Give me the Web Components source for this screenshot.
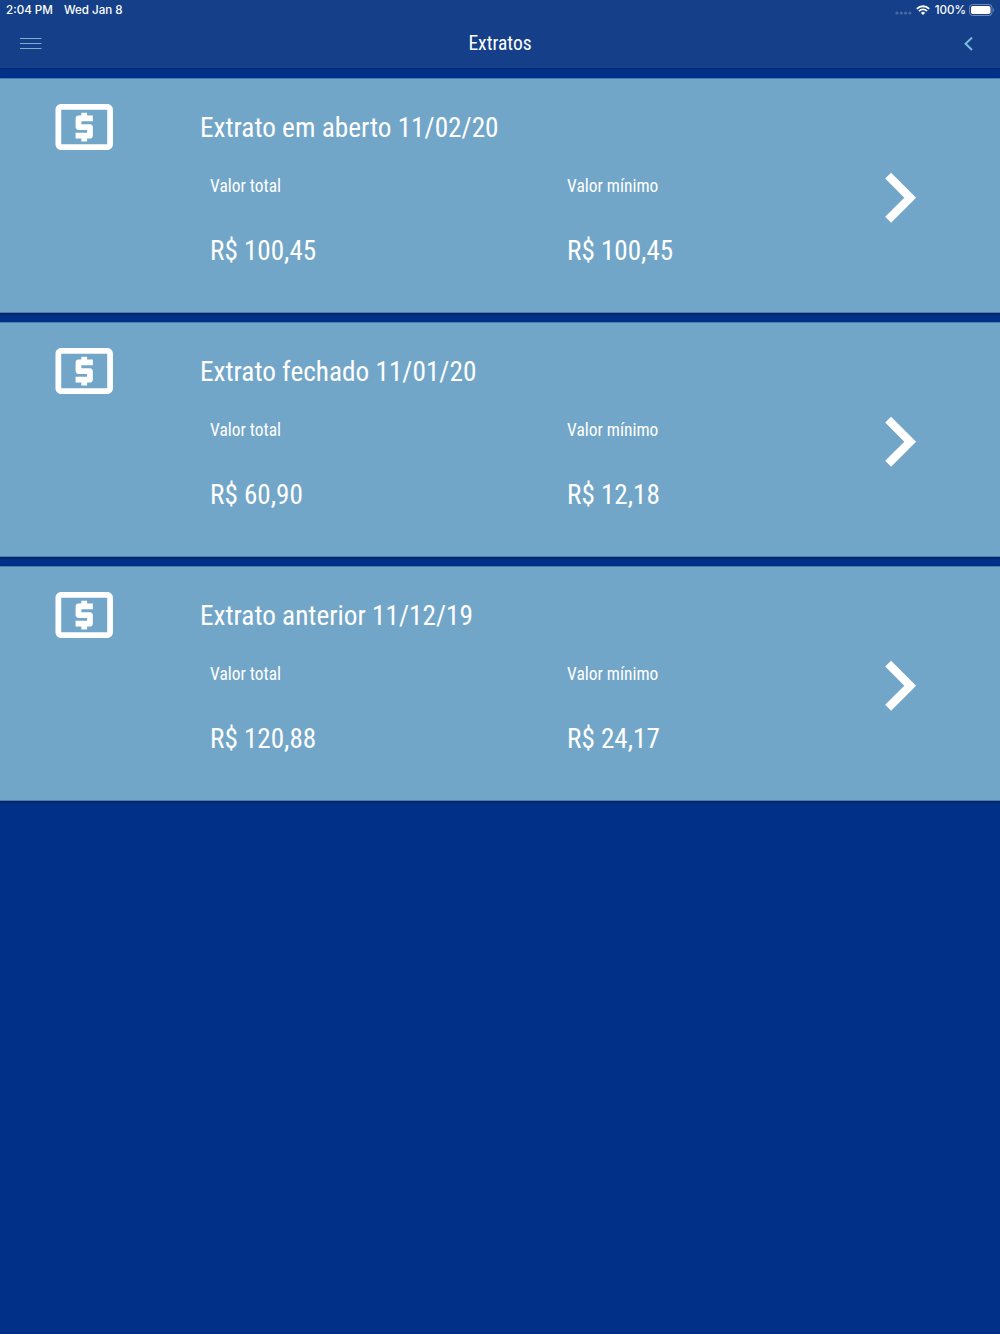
<!DOCTYPE html>
<html lang="pt-BR">
<head>
<meta charset="utf-8">
<title>Extratos</title>
<style>
    body {
        margin: 0;
        background: #003087;
    }
</style>
</head>
<body>
<statement-app>
    <status-bar slot="top" time="2:04 PM" date="Wed Jan 8" battery="100%"></status-bar>
    <nav-bar slot="top">Extratos</nav-bar>
    <statement-card total="R$ 100,45" minimum="R$ 100,45">Extrato em aberto 11/02/20</statement-card>
    <statement-card total="R$ 60,90" minimum="R$ 12,18">Extrato fechado 11/01/20</statement-card>
    <statement-card total="R$ 120,88" minimum="R$ 24,17">Extrato anterior 11/12/19</statement-card>
</statement-app>

<script>
class StatementApp extends HTMLElement {
    constructor() {
        super();
        this.attachShadow({ mode: 'open' });
        this.shadowRoot.innerHTML = `
            <style>
                :host {
                    display: block;
                    min-height: 1334px;
                    background: #003087;
                    color: #fff;
                    font-family: "Roboto Condensed", Roboto, sans-serif;
                    font-stretch: 75%;
                }
                header {
                    height: 68px;
                    background: #153f88;
                    box-shadow: 0 1px 1px rgba(0, 25, 90, .3);
                }
                main {
                    display: flex;
                    flex-direction: column;
                    gap: 9px;
                    padding-top: 10px;
                }
            </style>
            <header><slot name="top"></slot></header>
            <main><slot></slot></main>
        `;
    }
}

class StatusBar extends HTMLElement {
    constructor() {
        super();
        this.attachShadow({ mode: 'open' });
    }

    connectedCallback() {
        this.shadowRoot.innerHTML = `
            <style>
                :host {
                    display: flex;
                    align-items: center;
                    height: 20px;
                    padding: 0 5px 0 6px;
                    font: 500 11.6px/20px Inter, sans-serif;
                }
                .date { margin-left: 11px; }
                .dots { margin-left: auto; margin-top: 6px; }
                .wifi { margin: 0 5px 0 4px; }
                .battery { margin-left: 3px; }
                svg { display: block; }
            </style>
            <span>${this.getAttribute('time')}</span>
            <span class="date">${this.getAttribute('date')}</span>
            <svg class="dots" width="17" height="4" fill="#4a69a3">
                <circle cx="2" cy="2" r="1.6"/><circle cx="6.3" cy="2" r="1.6"/>
                <circle cx="10.6" cy="2" r="1.6"/><circle cx="14.9" cy="2" r="1.6"/>
            </svg>
            <svg class="wifi" width="14" height="10" viewBox="0 0 14 10" fill="none" stroke="#fff" stroke-width="1.8">
                <path d="M.8 3.8a8.8 8.8 0 0 1 12.4 0M3 6.1a5.7 5.7 0 0 1 8 0"/>
                <path d="M7 10L4.9 7.9a3 3 0 0 1 4.2 0z" fill="#fff" stroke="none"/>
            </svg>
            <span>${this.getAttribute('battery')}</span>
            <svg class="battery" width="26" height="12" viewBox="0 0 26 12">
                <rect x=".5" y=".5" width="22.5" height="11" rx="3" fill="none" stroke="#7089b8"/>
                <rect x="2" y="2" width="19.5" height="8" rx="1.7" fill="#fff"/>
                <path d="M24.3 4v4c1.3-.6 1.3-3.4 0-4z" fill="#7089b8"/>
            </svg>
        `;
    }
}

class NavBar extends HTMLElement {
    constructor() {
        super();
        this.attachShadow({ mode: 'open' });
        this.shadowRoot.innerHTML = `
            <style>
                :host {
                    display: grid;
                    grid-template-columns: 60px 1fr 60px;
                    align-items: center;
                    height: 48px;
                    font-size: 19.5px;
                    text-align: center;
                }
                svg { display: block; }
                span { margin-top: -1px; }
                .menu { margin-left: 20px; }
                .back { margin-left: 23px; }
            </style>
            <svg class="menu" width="22" height="12" stroke="#77b1d2" stroke-width="1">
                <path d="M0 .5h21.5M0 5.5h21.5M0 10.5h21.5"/>
            </svg>
            <span><slot></slot></span>
            <svg class="back" width="10" height="14" fill="none" stroke="#7cbddb" stroke-width="2">
                <path d="M9 .6L2.6 6.8 9 13"/>
            </svg>
        `;
    }
}

class StatementCard extends HTMLElement {
    constructor() {
        super();
        this.attachShadow({ mode: 'open' });
    }

    connectedCallback() {
        this.shadowRoot.innerHTML = `
            <style>
                :host {
                    display: grid;
                    grid-template-columns: 200px 649px 151px;
                    box-sizing: border-box;
                    height: 235px;
                    background: #72a6c8;
                    border: solid #4880b1;
                    border-width: 1px 0;
                    box-shadow: 0 1px 2px rgba(0, 0, 0, .45);
                }
                svg { display: block; }
                .money { margin: 13px 0 0 50px; }
                .arrow { margin-top: 69px; }
                .title {
                    margin-top: 29px;
                    font-size: 27.25px;
                    line-height: 40px;
                }
                .values {
                    display: grid;
                    grid-template-columns: 357px 1fr;
                    padding: 27px 0 0 10px;
                }
                .label {
                    font-size: 17.45px;
                    line-height: 22px;
                }
                .value {
                    margin-top: 34px;
                    font-size: 27.1px;
                    line-height: 40px;
                }
            </style>
            <svg class="money" width="69" height="69" viewBox=".1 -.2 24 24" fill="#fff">
                <path d="M11 17h2v-1h1c.55 0 1-.45 1-1v-3c0-.55-.45-1-1-1h-3v-1h4V8h-2V7h-2v1h-1c-.55 0-1 .45-1 1v3c0 .55.45 1 1 1h3v1H9v2h2v1zm9-13H4c-1.11 0-1.99.89-1.99 2L2 18c0 1.11.89 2 2 2h16c1.11 0 2-.89 2-2V6c0-1.11-.89-2-2-2zm0 14H4V6h16v12z"/>
            </svg>
            <div>
                <div class="title"><slot></slot></div>
                <div class="values">
                    <div>
                        <div class="label">Valor total</div>
                        <div class="value">${this.getAttribute('total')}</div>
                    </div>
                    <div>
                        <div class="label">Valor mínimo</div>
                        <div class="value">${this.getAttribute('minimum')}</div>
                    </div>
                </div>
            </div>
            <svg class="arrow" width="100" height="100" viewBox="-.1 .07 24 24" fill="#fff">
                <path d="M10 6L8.59 7.41 13.17 12l-4.58 4.59L10 18l6-6z"/>
            </svg>
        `;
    }
}

customElements.define('statement-app', StatementApp);
customElements.define('status-bar', StatusBar);
customElements.define('nav-bar', NavBar);
customElements.define('statement-card', StatementCard);
</script>
</body>
</html>
